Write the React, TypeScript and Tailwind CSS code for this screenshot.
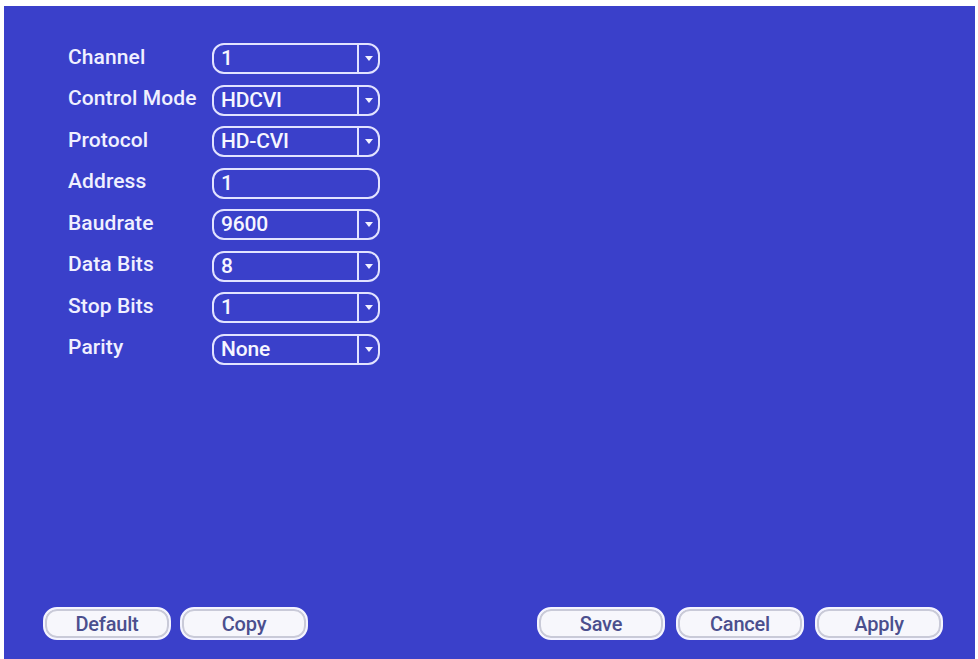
import React from "react";

type Field = {
  label: string;
  value: string;
  dropdown: boolean;
};

const fields: Field[] = [
  { label: "Channel", value: "1", dropdown: true },
  { label: "Control Mode", value: "HDCVI", dropdown: true },
  { label: "Protocol", value: "HD-CVI", dropdown: true },
  { label: "Address", value: "1", dropdown: false },
  { label: "Baudrate", value: "9600", dropdown: true },
  { label: "Data Bits", value: "8", dropdown: true },
  { label: "Stop Bits", value: "1", dropdown: true },
  { label: "Parity", value: "None", dropdown: true },
];

function FieldBox({ value, dropdown }: { value: string; dropdown: boolean }) {
  return (
    <div className="flex h-[31px] w-[168px] items-stretch overflow-hidden rounded-[12px] border-[2.5px] border-[#e2e3ff]">
      <div className="flex flex-1 items-center pl-[7px] text-[21px] font-medium leading-none tracking-[-0.2px] text-[#f6f6ff]">
        {value}
      </div>
      {dropdown && (
        <div className="flex w-[21px] items-center justify-center border-l-2 border-[#e2e3ff]">
          <svg width="8" height="5" viewBox="0 0 8 5">
            <path d="M0 0 H8 L4 5 Z" fill="#f2f2ff" />
          </svg>
        </div>
      )}
    </div>
  );
}

function PanelButton({ label }: { label: string }) {
  return (
    <button className="flex h-[33px] w-[128px] items-center justify-center rounded-[14px] border-2 border-[#f4f4ff] bg-[#f7f7fc] text-[20px] font-medium leading-none tracking-[-0.2px] text-[#4b4f8e] shadow-[inset_0_0_0_2px_#c9cad8]">
      {label}
    </button>
  );
}

export default function App() {
  return (
    <div className="h-[659px] w-[978px] bg-white pl-[4px] pr-[3px] pt-[6px] font-['Roboto',Arial,sans-serif]">
      <div className="flex h-full flex-col bg-[#3a40ca]">
        {/* Settings form */}
        <div className="flex flex-col gap-[10.5px] pl-[64px] pt-[37px]">
          {fields.map((f) => (
            <div key={f.label} className="flex items-center">
              <div className="w-[144px] pb-[3px] text-[21px] font-medium leading-none tracking-[0.1px] text-[#f0f0ff]">
                {f.label}
              </div>
              <FieldBox value={f.value} dropdown={f.dropdown} />
            </div>
          ))}
        </div>

        {/* Bottom action bar */}
        <div className="mt-auto flex items-center justify-between pb-[19px] pl-[39px] pr-[32px]">
          <div className="flex gap-[9px]">
            <PanelButton label="Default" />
            <PanelButton label="Copy" />
          </div>
          <div className="flex gap-[11px]">
            <PanelButton label="Save" />
            <PanelButton label="Cancel" />
            <PanelButton label="Apply" />
          </div>
        </div>
      </div>
    </div>
  );
}
